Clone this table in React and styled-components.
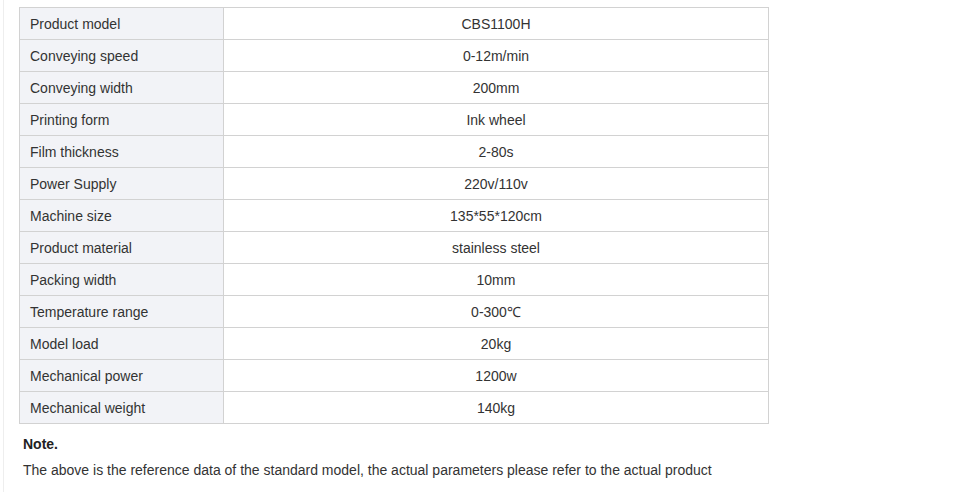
import React from "react";
import styled, { createGlobalStyle } from "styled-components";

const Global = createGlobalStyle`
  html, body { margin: 0; padding: 0; background: #fff; }
  body { font-family: "Liberation Sans", Arial, sans-serif; color: #333; }
`;

const Page = styled.div`
  margin-left: 3px;
  border-left: 1px solid #eeeeee;
  padding: 7px 0 20px 15px;
  min-height: 465px;
`;

const Table = styled.table`
  width: 750px;
  border-collapse: collapse;
  font-size: 14px;
  color: #333;
`;

const Cell = styled.td`
  height: 32px;
  box-sizing: border-box;
  padding: 0 10px;
  border: 1px solid #d2d2d2;
  text-align: ${(p) => (p.$label ? "left" : "center")};
  background: ${(p) => (p.$label ? "#f2f3f7" : "#fff")};
  width: ${(p) => (p.$label ? "204px" : "auto")};
  line-height: 20px;
`;

const Note = styled.div`
  margin: 10px 0 0 4px;
  font-size: 14px;
  font-weight: bold;
  line-height: 20px;
  color: #222;
`;

const Para = styled.p`
  margin: 6px 0 0 4px;
  font-size: 14px;
  line-height: 20px;
  color: #333;
`;

const rows = [
  ["Product model", "CBS1100H"],
  ["Conveying speed", "0-12m/min"],
  ["Conveying width", "200mm"],
  ["Printing form", "Ink wheel"],
  ["Film thickness", "2-80s"],
  ["Power Supply", "220v/110v"],
  ["Machine size", "135*55*120cm"],
  ["Product material", "stainless steel"],
  ["Packing width", "10mm"],
  ["Temperature range", "0-300℃"],
  ["Model load", "20kg"],
  ["Mechanical power", "1200w"],
  ["Mechanical weight", "140kg"],
];

export default function App() {
  return (
    <>
      <Global />
      <Page>
        <Table>
          <tbody>
            {rows.map(([k, v]) => (
              <tr key={k}>
                <Cell $label>{k}</Cell>
                <Cell>{v}</Cell>
              </tr>
            ))}
          </tbody>
        </Table>
        <Note>Note.</Note>
        <Para>
          The above is the reference data of the standard model, the actual parameters please refer to the actual product
        </Para>
      </Page>
    </>
  );
}
